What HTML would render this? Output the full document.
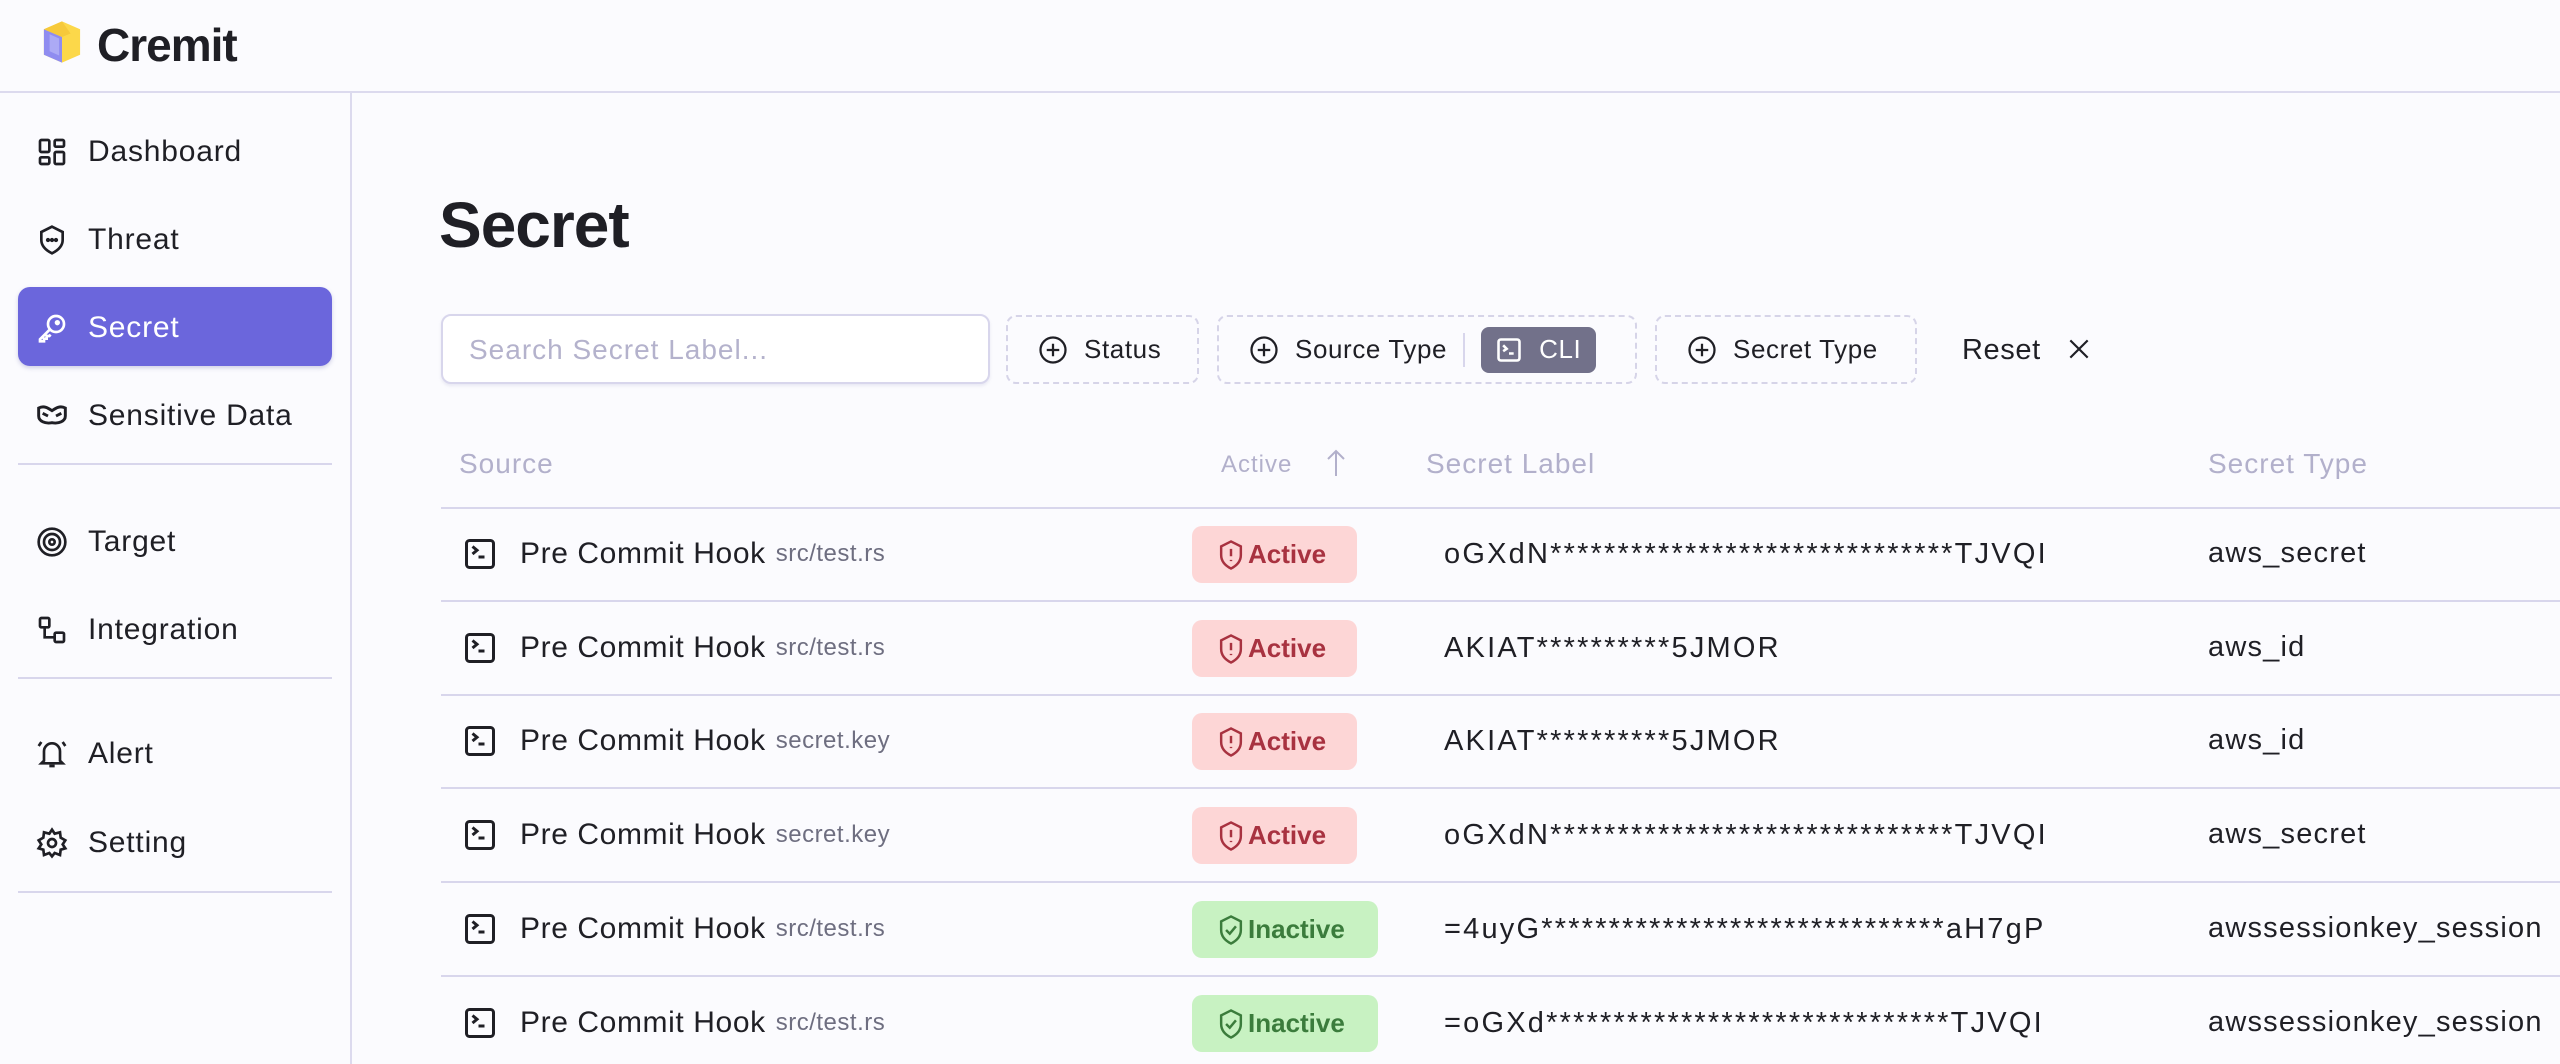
<!DOCTYPE html>
<html><head><meta charset="utf-8"><style>
*{margin:0;padding:0;box-sizing:border-box}
body{width:2560px;height:1064px;background:#fbfbfe;font-family:"Liberation Sans",sans-serif;color:#1f1f25;position:relative;overflow:hidden}
.a{position:absolute;white-space:nowrap}
.hl{left:0;right:0;top:91px;height:2px;background:#dcdaee}
.vl{left:350px;top:93px;bottom:0;width:2px;background:#dcdaee}
.nav{left:36px;height:40px;display:flex;align-items:center;font-size:30px;color:#1f1f25;letter-spacing:.8px}
.nav svg{width:32px;height:32px;margin-right:20px;flex-shrink:0}
.div{left:18px;width:314px;height:2px;background:#d8d6ec}
.pill{left:18px;top:287px;width:314px;height:79px;background:#6b66dc;border-radius:12px;box-shadow:0 2px 4px rgba(80,80,160,.25)}
.btn{top:315px;height:69px;border:2px dashed #d6d4e8;border-radius:10px;display:flex;align-items:center;font-size:26px;color:#1f1f25;white-space:nowrap;letter-spacing:.6px}
.btn svg{width:30px;height:30px;margin:0 16px 0 30px;flex-shrink:0}
.th{top:448px;font-size:28px;color:#b2b0cb;letter-spacing:1px}
.line{left:441px;right:0;height:2px;background:#d8d6ec}
.src{left:462px;display:flex;align-items:center;font-size:30px;letter-spacing:.6px}
.src svg{width:36px;height:36px;margin-right:22px}
.src span{font-size:24px;color:#6e6e80;margin-left:10px;letter-spacing:.5px}
.badge{left:1192px;height:57px;border-radius:10px;display:flex;align-items:center;padding-left:26px;font-size:26px;font-weight:bold}
.badge svg{width:26px;height:32px;margin-right:4px}
.red{background:#fdd6d6;color:#a83240;width:165px}
.grn{background:#c8f2c2;color:#3b7c3c;width:186px}
.lab{left:1444px;font-size:29px;letter-spacing:2.2px}
.typ{left:2208px;font-size:29px;letter-spacing:1.2px}
</style></head><body>
<div class="a hl"></div><div class="a vl"></div>
<svg class="a" style="left:42px;top:20px" width="40" height="44" viewBox="0 0 42 62" preserveAspectRatio="none"><path d="M21 2 L40 13 L40 49 L21 60 L2 49 L2 13Z" fill="#fcd84a"/><path d="M2 13 L21 24 L21 60 L2 49Z" fill="#8f8cf0"/><path d="M21 2 L2 13 L21 24 L30 19Z" fill="#f6c93a"/><path d="M8 20 L18 26 L18 50 L8 44Z" fill="#b8b6f7" opacity=".7"/></svg>
<div class="a" style="left:97px;top:18px;font-size:46px;font-weight:bold;letter-spacing:-1px">Cremit</div>

<div class="a pill"></div>
<div class="a nav" style="top:132px"><svg viewBox="0 0 24 24" fill="none" stroke="#1f1f25" stroke-width="2"><rect x="3" y="3" width="7" height="9" rx="1"/><rect x="14" y="3" width="7" height="5" rx="1"/><rect x="14" y="12" width="7" height="9" rx="1"/><rect x="3" y="16" width="7" height="5" rx="1"/></svg>Dashboard</div>
<div class="a nav" style="top:220px"><svg viewBox="0 0 24 24" fill="none" stroke="#1f1f25" stroke-width="2"><path d="M12 2 L20 6 V12 C20 17 16 20 12 22 C8 20 4 17 4 12 V6Z"/><circle cx="9" cy="12" r=".6" fill="#1f1f25"/><circle cx="12" cy="12" r=".6" fill="#1f1f25"/><circle cx="15" cy="12" r=".6" fill="#1f1f25"/></svg>Threat</div>
<div class="a nav" style="top:308px;color:#fff"><svg viewBox="0 0 24 24" fill="none" stroke="#fff" stroke-width="2"><circle cx="15" cy="9" r="6"/><path d="M10.5 13 L3 20.5 V22 H6 V20 H8 V18 H10 L11 17"/><circle cx="16" cy="8" r="1" fill="#fff"/></svg>Secret</div>
<div class="a nav" style="top:396px"><svg viewBox="0 0 24 24" fill="none" stroke="#1f1f25" stroke-width="2.2"><path d="M2 6 C6 4 9 6 12 8 C15 6 18 4 22 6 V12 C22 16 17 18 12 17 C7 18 2 16 2 12Z"/><path d="M5 10 L9 12 M19 10 L15 12"/></svg>Sensitive Data</div>
<div class="a div" style="top:463px"></div>
<div class="a nav" style="top:522px"><svg viewBox="0 0 24 24" fill="none" stroke="#1f1f25" stroke-width="2"><circle cx="12" cy="12" r="10"/><circle cx="12" cy="12" r="6"/><circle cx="12" cy="12" r="2"/></svg>Target</div>
<div class="a nav" style="top:610px"><svg viewBox="0 0 24 24" fill="none" stroke="#1f1f25" stroke-width="2"><rect x="3" y="3" width="7" height="7" rx="1"/><rect x="14" y="14" width="7" height="7" rx="1"/><path d="M6.5 10 V17.5 H14"/></svg>Integration</div>
<div class="a div" style="top:677px"></div>
<div class="a nav" style="top:734px"><svg viewBox="0 0 24 24" fill="none" stroke="#1f1f25" stroke-width="2"><path d="M6 17 V10 A6 6 0 0 1 18 10 V17 L20 19 H4Z"/><path d="M10 21 H14 M2 6 L4 3 M22 6 L20 3"/></svg>Alert</div>
<div class="a nav" style="top:823px"><svg viewBox="0 0 24 24" fill="none" stroke="#1f1f25" stroke-width="2"><circle cx="12" cy="12" r="3"/><path d="M12 2 L14 5 L18 4 L18.5 8 L22 10 L20 13 L22 16 L18.5 17 L18 21 L14 19.5 L12 22 L10 19.5 L6 21 L5.5 17 L2 16 L4 13 L2 10 L5.5 8 L6 4 L10 5Z"/></svg>Setting</div>
<div class="a div" style="top:891px"></div>

<div class="a" style="left:439px;top:188px;font-size:64px;font-weight:bold;letter-spacing:-1px">Secret</div>
<div class="a" style="left:441px;top:314px;width:549px;height:70px;border:2px solid #d8d6ec;border-radius:10px;background:#fff;box-shadow:0 2px 3px rgba(160,160,200,.2);font-size:28px;color:#b4b2cc;padding:18px 0 0 26px;letter-spacing:1px">Search Secret Label...</div>
<div class="a btn" style="left:1006px;width:193px"><svg viewBox="0 0 24 24" fill="none" stroke="#1f1f25" stroke-width="1.8"><circle cx="12" cy="12" r="10"/><path d="M12 7V17M7 12H17"/></svg>Status</div>
<div class="a btn" style="left:1217px;width:420px"><svg viewBox="0 0 24 24" fill="none" stroke="#1f1f25" stroke-width="1.8"><circle cx="12" cy="12" r="10"/><path d="M12 7V17M7 12H17"/></svg>Source Type<div style="width:2px;height:34px;background:#d8d6ec;margin:0 16px;flex-shrink:0"></div><div style="background:#72718a;color:#fff;border-radius:8px;height:46px;width:115px;flex-shrink:0;display:flex;align-items:center;font-size:26px"><svg style="margin:0 16px 0 14px;width:28px;height:28px" viewBox="0 0 24 24" fill="none" stroke="#fff" stroke-width="2.2"><rect x="3" y="3" width="18" height="18" rx="2"/><path d="M7 8 L10 11 L7 13 M12 15 H16"/></svg>CLI</div></div>
<div class="a btn" style="left:1655px;width:262px"><svg viewBox="0 0 24 24" fill="none" stroke="#1f1f25" stroke-width="1.8"><circle cx="12" cy="12" r="10"/><path d="M12 7V17M7 12H17"/></svg>Secret Type</div>
<div class="a" style="left:1962px;top:334px;font-size:29px;letter-spacing:.6px">Reset</div>
<svg class="a" style="left:2066px;top:336px" width="26" height="26" viewBox="0 0 24 24" stroke="#1f1f25" stroke-width="2"><path d="M4 4L20 20M20 4L4 20"/></svg>

<div class="a th" style="left:459px">Source</div>
<div class="a th" style="left:1221px;font-size:24px;top:451px">Active</div>
<svg class="a" style="left:1324px;top:448px" width="24" height="30" viewBox="0 0 24 30" fill="none" stroke="#b2b0cb" stroke-width="2"><path d="M12 28V3M4 11L12 3L20 11"/></svg>
<div class="a th" style="left:1426px">Secret Label</div>
<div class="a th" style="left:2208px">Secret Type</div>
<div class="a line" style="top:507px"></div>
<div class="a line" style="top:600px"></div>
<div class="a line" style="top:694px"></div>
<div class="a line" style="top:787px"></div>
<div class="a line" style="top:881px"></div>
<div class="a line" style="top:975px"></div>

<div class="a src" style="top:536px"><svg viewBox="0 0 24 24" fill="none" stroke="#1f1f25" stroke-width="2"><rect x="3" y="3" width="18" height="18" rx="2"/><path d="M7 7 L10 9.5 L7 12 M11 14 H15"/></svg>Pre Commit Hook<span>src/test.rs</span></div>
<div class="a src" style="top:630px"><svg viewBox="0 0 24 24" fill="none" stroke="#1f1f25" stroke-width="2"><rect x="3" y="3" width="18" height="18" rx="2"/><path d="M7 7 L10 9.5 L7 12 M11 14 H15"/></svg>Pre Commit Hook<span>src/test.rs</span></div>
<div class="a src" style="top:723px"><svg viewBox="0 0 24 24" fill="none" stroke="#1f1f25" stroke-width="2"><rect x="3" y="3" width="18" height="18" rx="2"/><path d="M7 7 L10 9.5 L7 12 M11 14 H15"/></svg>Pre Commit Hook<span>secret.key</span></div>
<div class="a src" style="top:817px"><svg viewBox="0 0 24 24" fill="none" stroke="#1f1f25" stroke-width="2"><rect x="3" y="3" width="18" height="18" rx="2"/><path d="M7 7 L10 9.5 L7 12 M11 14 H15"/></svg>Pre Commit Hook<span>secret.key</span></div>
<div class="a src" style="top:911px"><svg viewBox="0 0 24 24" fill="none" stroke="#1f1f25" stroke-width="2"><rect x="3" y="3" width="18" height="18" rx="2"/><path d="M7 7 L10 9.5 L7 12 M11 14 H15"/></svg>Pre Commit Hook<span>src/test.rs</span></div>
<div class="a src" style="top:1005px"><svg viewBox="0 0 24 24" fill="none" stroke="#1f1f25" stroke-width="2"><rect x="3" y="3" width="18" height="18" rx="2"/><path d="M7 7 L10 9.5 L7 12 M11 14 H15"/></svg>Pre Commit Hook<span>src/test.rs</span></div>

<div class="a badge red" style="top:526px"><svg viewBox="0 0 20 26" fill="none" stroke="#a83240" stroke-width="2"><path d="M10 2 L18 6 V13 C18 19 14 22 10 24 C6 22 2 19 2 13 V6Z"/><path d="M10 8V14M10 17V18"/></svg>Active</div>
<div class="a badge red" style="top:620px"><svg viewBox="0 0 20 26" fill="none" stroke="#a83240" stroke-width="2"><path d="M10 2 L18 6 V13 C18 19 14 22 10 24 C6 22 2 19 2 13 V6Z"/><path d="M10 8V14M10 17V18"/></svg>Active</div>
<div class="a badge red" style="top:713px"><svg viewBox="0 0 20 26" fill="none" stroke="#a83240" stroke-width="2"><path d="M10 2 L18 6 V13 C18 19 14 22 10 24 C6 22 2 19 2 13 V6Z"/><path d="M10 8V14M10 17V18"/></svg>Active</div>
<div class="a badge red" style="top:807px"><svg viewBox="0 0 20 26" fill="none" stroke="#a83240" stroke-width="2"><path d="M10 2 L18 6 V13 C18 19 14 22 10 24 C6 22 2 19 2 13 V6Z"/><path d="M10 8V14M10 17V18"/></svg>Active</div>
<div class="a badge grn" style="top:901px"><svg viewBox="0 0 20 26" fill="none" stroke="#3b7c3c" stroke-width="2"><path d="M10 2 L18 6 V13 C18 19 14 22 10 24 C6 22 2 19 2 13 V6Z"/><path d="M6 13 L9 16 L14 10"/></svg>Inactive</div>
<div class="a badge grn" style="top:995px"><svg viewBox="0 0 20 26" fill="none" stroke="#3b7c3c" stroke-width="2"><path d="M10 2 L18 6 V13 C18 19 14 22 10 24 C6 22 2 19 2 13 V6Z"/><path d="M6 13 L9 16 L14 10"/></svg>Inactive</div>

<div class="a lab" style="top:538px">oGXdN******************************TJVQI</div>
<div class="a lab" style="top:632px">AKIAT**********5JMOR</div>
<div class="a lab" style="top:725px">AKIAT**********5JMOR</div>
<div class="a lab" style="top:819px">oGXdN******************************TJVQI</div>
<div class="a lab" style="top:913px">=4uyG******************************aH7gP</div>
<div class="a lab" style="top:1007px">=oGXd******************************TJVQI</div>

<div class="a typ" style="top:537px">aws_secret</div>
<div class="a typ" style="top:631px">aws_id</div>
<div class="a typ" style="top:724px">aws_id</div>
<div class="a typ" style="top:818px">aws_secret</div>
<div class="a typ" style="top:912px">awssessionkey_session</div>
<div class="a typ" style="top:1006px">awssessionkey_session</div>
</body></html>
